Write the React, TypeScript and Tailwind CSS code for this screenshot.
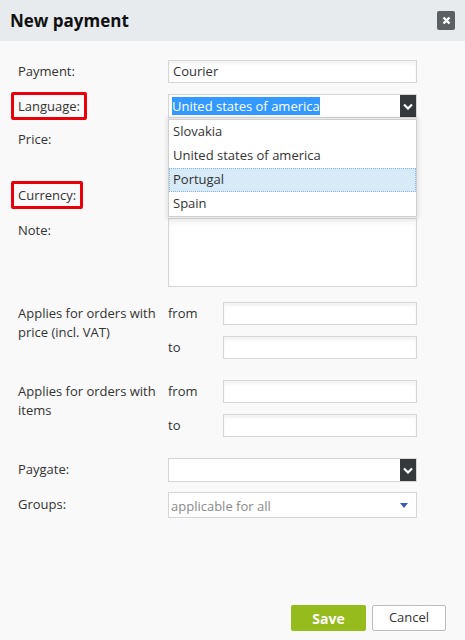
import React from "react";

const inputCls =
    "h-[23px] border border-[#d6d6d6] bg-white shadow-[inset_0_3px_3px_rgba(0,0,0,0.05)]";

function Chevron() {
    return (
        <svg width="10" height="7" viewBox="0 0 10 7">
            <path d="M1 1.5 L5 5.5 L9 1.5" stroke="#fff" strokeWidth="2.2" fill="none" />
        </svg>
    );
}

function SelectBox({ children }: { children?: React.ReactNode }) {
    return (
        <div className="flex h-[24px] w-[249px] border border-[#d6d6d6] bg-white">
            <div className="flex flex-1 items-center pl-[3px]">{children}</div>
            <div className="flex w-[16px] items-center justify-center bg-[#36393b]">
                <Chevron />
            </div>
        </div>
    );
}

function Marked({ children }: { children: React.ReactNode }) {
    return (
        <span className="-ml-[7px] inline-block rounded-[2px] border-[3px] border-[#e8000b] px-[4px] py-[2px] leading-[18px]">
            {children}
        </span>
    );
}

export default function App() {
    const options = ["Slovakia", "United states of america", "Portugal", "Spain"];

    return (
        <div
            className="flex min-h-[640px] w-[465px] flex-col bg-[#f9f9f9] text-[13px] text-[#333]"
            style={{ fontFamily: '"Open Sans", "Noto Sans", sans-serif' }}
        >
            {/* Header */}
            <div className="flex h-[41px] items-center justify-between bg-[#e8ebee] pl-[10px] pr-[10px]">
                <h1 className="text-[17px] font-bold text-[#111]">New payment</h1>
                <button className="flex h-[19px] w-[18px] items-center justify-center rounded-[2px] bg-[#5d6063]">
                    <svg width="9" height="9" viewBox="0 0 9 9">
                        <path d="M1.5 1.5 L7.5 7.5 M7.5 1.5 L1.5 7.5" stroke="#fff" strokeWidth="2.4" />
                    </svg>
                </button>
            </div>

            {/* Form */}
            <div className="flex flex-col pl-[18px] pt-[19px]">
                <div className="flex items-center">
                    <label className="w-[150px]">Payment:</label>
                    <div className={`${inputCls} flex w-[249px] items-center pl-[4px]`}>Courier</div>
                </div>

                <div className="relative mt-[11px] flex items-center">
                    <label className="flex h-[24px] w-[150px] items-center">
                        <Marked>Language:</Marked>
                    </label>
                    <SelectBox>
                        <span className="bg-[#3399ff] leading-[18px] text-white">United states of america</span>
                    </SelectBox>
                    {/* Open dropdown */}
                    <div className="absolute left-[150px] top-[25px] z-10 w-[249px] border border-[#cfcfcf] bg-white shadow-[0_0_4px_2px_rgba(0,0,0,0.08)]">
                        {options.map((o) => (
                            <div
                                key={o}
                                className={
                                    o === "Portugal"
                                        ? "flex h-[24px] items-center border border-dotted border-[#8fb5df] bg-[#d6eaf8] pl-[3px]"
                                        : "flex h-[24px] items-center border border-transparent pl-[3px]"
                                }
                            >
                                {o}
                            </div>
                        ))}
                    </div>
                </div>

                <div className="mt-[10px] flex items-center">
                    <label className="w-[150px]">Price:</label>
                    <div className={`${inputCls} w-[249px]`} />
                </div>

                <div className="mt-[32px] flex items-center">
                    <label className="flex h-[24px] w-[150px] items-center">
                        <Marked>Currency:</Marked>
                    </label>
                    <SelectBox />
                </div>

                <div className="mt-[11px] flex">
                    <label className="w-[150px] pt-[3px]">Note:</label>
                    <div className="h-[69px] w-[249px] border border-[#d6d6d6] bg-white shadow-[inset_0_4px_5px_rgba(0,0,0,0.05)]" />
                </div>

                <div className="mt-[15px] flex">
                    <label className="w-[150px] pt-[2px] leading-[19px]">
                        Applies for orders with
                        <br />
                        price (incl. VAT)
                    </label>
                    <div className="flex flex-col gap-[11px]">
                        <div className="flex items-center">
                            <span className="w-[55px]">from</span>
                            <div className={`${inputCls} w-[194px]`} />
                        </div>
                        <div className="flex items-center">
                            <span className="w-[55px]">to</span>
                            <div className={`${inputCls} w-[194px]`} />
                        </div>
                    </div>
                </div>

                <div className="mt-[21px] flex">
                    <label className="w-[150px] pt-[2px] leading-[19px]">
                        Applies for orders with
                        <br />
                        items
                    </label>
                    <div className="flex flex-col gap-[11px]">
                        <div className="flex items-center">
                            <span className="w-[55px]">from</span>
                            <div className={`${inputCls} w-[194px]`} />
                        </div>
                        <div className="flex items-center">
                            <span className="w-[55px]">to</span>
                            <div className={`${inputCls} w-[194px]`} />
                        </div>
                    </div>
                </div>

                <div className="mt-[21px] flex items-center">
                    <label className="w-[150px]">Paygate:</label>
                    <SelectBox />
                </div>

                <div className="mt-[10px] flex items-center">
                    <label className="w-[150px]">Groups:</label>
                    <div className="flex h-[26px] w-[249px] items-center justify-between border border-[#d6d6d6] bg-white">
                        <span className="ml-[2px] mt-[3px] w-[128px] bg-white text-[#8a8a8a]">applicable for all</span>
                        <svg width="8" height="5" viewBox="0 0 8 5" className="mr-[8px]">
                            <path d="M0 0 L8 0 L4 5 Z" fill="#3b58b8" />
                        </svg>
                    </div>
                </div>
            </div>

            {/* Footer */}
            <div className="mt-auto flex justify-end gap-[6px] pb-[9px] pr-[19px]">
                <button className="h-[26px] w-[75px] rounded-[2px] bg-[#95bb1c] text-[14px] font-bold text-white">
                    Save
                </button>
                <button className="h-[26px] w-[74px] rounded-[2px] border border-[#bdbdbd] bg-white text-[13px] text-[#333]">
                    Cancel
                </button>
            </div>
        </div>
    );
}
